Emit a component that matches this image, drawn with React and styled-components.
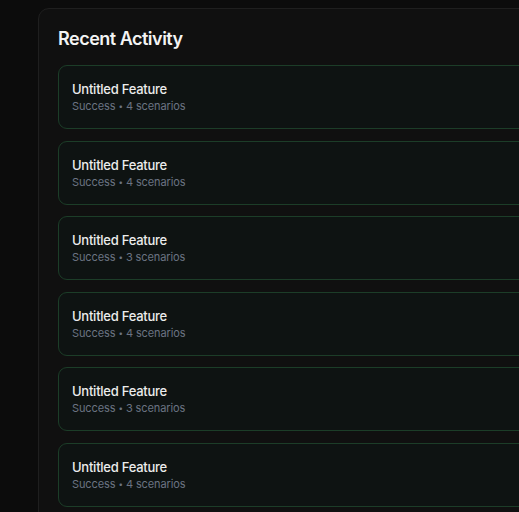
import React from "react";
import styled, { createGlobalStyle } from "styled-components";

const Global = createGlobalStyle`
  html, body {
    margin: 0;
    padding: 0;
    background: #0c0c0c;
    overflow: hidden;
    font-family: Inter, "Noto Sans", "Liberation Sans", sans-serif;
  }
`;

const Page = styled.div`
  padding: 8px 0 0 38px;
  width: 100vw;
  height: 512px;
  box-sizing: border-box;
  overflow: hidden;
`;

const Card = styled.section`
  width: 640px;
  background: #101010;
  border: 1px solid #1f1f1f;
  border-radius: 11px;
  padding: 18px 20px 20px 19px;
  display: flex;
  flex-direction: column;
`;

const Title = styled.h2`
  margin: 0 0 14px;
  font-size: 18px;
  line-height: 24px;
  font-weight: 600;
  color: #f4f4f4;
  letter-spacing: -0.5px;
`;

const List = styled.div`
  display: flex;
  flex-direction: column;
  gap: 11.6px;
`;

const Item = styled.div`
  background: #0e1312;
  border: 1px solid #1c3d28;
  border-radius: 9px;
  padding: 14px 13px;
  display: flex;
  flex-direction: column;
`;

const ItemTitle = styled.div`
  font-size: 13px;
  line-height: 18px;
  font-weight: 500;
  color: #ececec;
  letter-spacing: -0.25px;
`;

const ItemMeta = styled.div`
  font-size: 11px;
  line-height: 16px;
  color: #6b7382;
  letter-spacing: -0.1px;
`;

const Dot = styled.span`
  font-size: 8px;
  margin: 0 3px;
  vertical-align: 1px;
`;

const items = [4, 4, 3, 4, 3, 4];

export default function App() {
  return (
    <>
      <Global />
      <Page>
        <Card>
          <Title>Recent Activity</Title>
          <List>
            {items.map((n, i) => (
              <Item key={i}>
                <ItemTitle>Untitled Feature</ItemTitle>
                <ItemMeta>
                  Success<Dot>•</Dot>{n} scenarios
                </ItemMeta>
              </Item>
            ))}
          </List>
        </Card>
      </Page>
    </>
  );
}
